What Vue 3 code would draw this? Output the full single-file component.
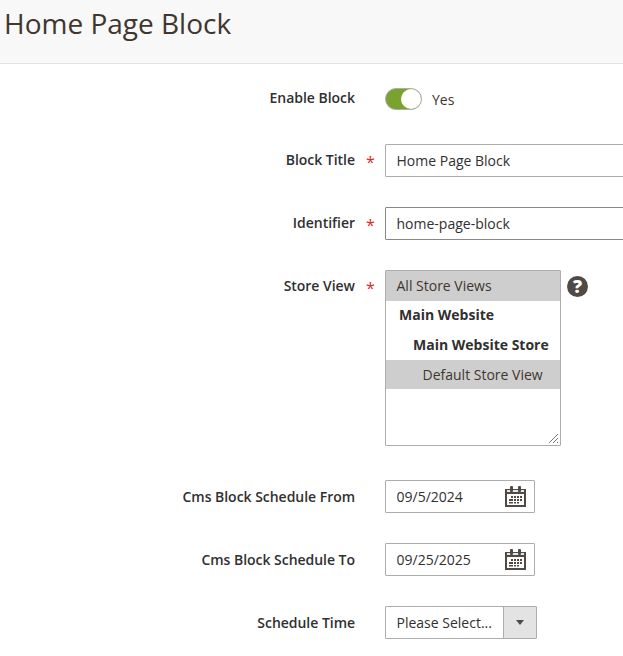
<template>
  <div class="page">
    <header class="page-header">
      <h1>Home Page Block</h1>
    </header>

    <form class="block-form" @submit.prevent>
      <div class="field toggle-field">
        <label class="field-label">Enable Block</label>
        <div class="field-control toggle-wrap">
          <button
            type="button"
            class="toggle"
            :class="{ on: enabled }"
            @click="enabled = !enabled"
          >
            <span class="knob"></span>
          </button>
          <span class="toggle-text">{{ enabled ? "Yes" : "No" }}</span>
        </div>
      </div>

      <div class="field required">
        <label class="field-label" for="title">Block Title</label>
        <div class="field-control">
          <input id="title" v-model="title" type="text" class="text-input wide" />
        </div>
      </div>

      <div class="field required">
        <label class="field-label" for="identifier">Identifier</label>
        <div class="field-control">
          <input id="identifier" v-model="identifier" type="text" class="text-input wide dark" />
        </div>
      </div>

      <div class="field required store-field">
        <label class="field-label">Store View</label>
        <div class="field-control store-control">
          <div class="store-list">
            <div
              v-for="item in stores"
              :key="item.label"
              class="store-option"
              :class="[item.kind, { selected: item.selected }]"
            >
              {{ item.label }}
            </div>
            <svg class="resize-grip" width="11" height="11" viewBox="0 0 11 11">
              <path d="M1 10 L10 1 M5 10 L10 5 M9 10 L10 9" stroke="#777" stroke-width="1" fill="none" />
            </svg>
          </div>
          <span class="help-icon">?</span>
        </div>
      </div>

      <div v-for="date in dates" :key="date.id" class="field date-field">
        <label class="field-label" :for="date.id">{{ date.label }}</label>
        <div class="field-control">
          <div class="date-box">
            <input :id="date.id" v-model="date.value" type="text" class="date-input" />
            <svg class="calendar" width="21" height="21" viewBox="0 0 21 21">
              <rect x="0" y="3" width="21" height="18" fill="#514943" />
              <rect x="2" y="8" width="17" height="11" fill="#fff" />
              <rect x="2" y="4" width="17" height="2" fill="#e8e6e4" />
              <rect x="5" y="0" width="3" height="6" rx="1" fill="#514943" />
              <rect x="13" y="0" width="3" height="6" rx="1" fill="#514943" />
              <path
                d="M6 10h2v2H6zM9 10h2v2H9zM12 10h2v2h-2zM15 10h2v2h-2zM4 13h2v2H4zM6 13h2v2H6zM9 13h2v2H9zM12 13h2v2h-2zM15 13h2v2h-2zM4 16h2v1.5H4zM6 16h2v1.5H6zM9 16h2v1.5H9zM12 16h2v1.5h-2z"
                fill="#514943"
              />
            </svg>
          </div>
        </div>
      </div>

      <div class="field time-field">
        <label class="field-label">Schedule Time</label>
        <div class="field-control">
          <div class="select-box">
            <span class="select-value">Please Select...</span>
            <span class="select-arrow"></span>
          </div>
        </div>
      </div>
    </form>
  </div>
</template>

<script setup>
import { reactive, ref } from "vue";

const enabled = ref(true);
const title = ref("Home Page Block");
const identifier = ref("home-page-block");

const stores = [
  { label: "All Store Views", kind: "level-all", selected: true },
  { label: "Main Website", kind: "level-site", selected: false },
  { label: "Main Website Store", kind: "level-store", selected: false },
  { label: "Default Store View", kind: "level-view", selected: true },
];

const dates = reactive([
  { id: "from", label: "Cms Block Schedule From", value: "09/5/2024" },
  { id: "to", label: "Cms Block Schedule To", value: "09/25/2025" },
]);
</script>

<style>
html,
body {
  margin: 0;
  background: #fff;
  overflow: hidden;
}
</style>

<style scoped>
* {
  box-sizing: border-box;
  font-family: "Open Sans", sans-serif;
}

.page {
  width: 623px;
  height: 656px;
  overflow: hidden;
  color: #303030;
  font-size: 14px;
}

.page-header {
  height: 64px;
  padding: 4px 0 0 4px;
  background: #f8f8f8;
  border-bottom: 1px solid #e3e3e3;
}

.page-header h1 {
  margin: 0;
  font-size: 28px;
  font-weight: 400;
  line-height: 38px;
  color: #41362f;
}

.block-form {
  padding-top: 24px;
}

.field {
  display: flex;
  align-items: flex-start;
  margin-bottom: 30px;
}

.toggle-field,
.store-field {
  margin-bottom: 34px;
}

.field-label {
  position: relative;
  width: 355px;
  flex: none;
  padding-top: 6px;
  font-weight: 600;
  line-height: 20px;
  letter-spacing: -0.03px;
  text-align: right;
  color: #303030;
}

.toggle-field .field-label {
  padding-top: 0;
}

.date-field .field-label,
.time-field .field-label {
  padding-top: 7px;
}

.required .field-label::after {
  content: "*";
  position: absolute;
  left: 366px;
  top: 8px;
  color: #e22626;
  font-size: 16px;
  font-weight: 400;
  line-height: 20px;
}

.field-control {
  margin-left: 30px;
}

.toggle-wrap {
  display: flex;
  align-items: center;
  gap: 10px;
  height: 22px;
}

.toggle {
  position: relative;
  width: 37px;
  height: 22px;
  padding: 0;
  border: 1px solid #adadad;
  border-radius: 12px;
  background: #adadad;
}

.toggle.on {
  background: #79a22e;
}

.knob {
  position: absolute;
  top: 0;
  right: 0;
  width: 20px;
  height: 20px;
  border-radius: 50%;
  background: #fff;
}

.toggle-text {
  color: #41362f;
  font-size: 14px;
}

.text-input {
  display: block;
  height: 33px;
  padding: 0 10.5px;
  border: 1px solid #adadad;
  border-radius: 1px;
  outline: none;
  color: #303030;
  font-size: 14px;
  background: #fff;
}

.text-input.wide {
  width: 420px;
}

.text-input.dark {
  border-color: #888;
}

.store-control {
  display: flex;
  align-items: flex-start;
  gap: 6px;
}

.store-list {
  position: relative;
  width: 176px;
  height: 176px;
  border: 1px solid #adadad;
  border-radius: 1px;
  background: #fff;
}

.store-option {
  height: 29.5px;
  line-height: 29px;
  color: #303030;
  white-space: nowrap;
}

.store-option.selected {
  background: #cecece;
  color: #41362f;
}

.level-all {
  padding-left: 10.5px;
}

.level-site {
  padding-left: 13px;
  font-weight: 700;
  line-height: 27px;
}

.level-store {
  padding-left: 27px;
  font-weight: 700;
}

.level-view {
  padding-left: 36.5px;
}

.resize-grip {
  position: absolute;
  right: 1px;
  bottom: 1px;
}

.help-icon {
  width: 21px;
  height: 21px;
  margin-top: 6px;
  border-radius: 50%;
  background: #514943;
  color: #fff;
  font-size: 18px;
  font-weight: 800;
  line-height: 21px;
  text-align: center;
}

.date-box {
  display: flex;
  align-items: center;
  width: 150px;
  height: 33px;
  padding: 0 8px 0 10.5px;
  border: 1px solid #adadad;
  border-radius: 1px;
  background: #fff;
}

.date-input {
  flex: 1;
  width: 0;
  padding: 0;
  border: 0;
  outline: none;
  color: #303030;
  font-size: 14px;
}

.calendar {
  flex: none;
}

.select-box {
  display: flex;
  width: 152px;
  height: 33px;
  border: 1px solid #adadad;
  border-radius: 1px;
  background: #fff;
}

.select-value {
  flex: 1;
  padding-left: 10.5px;
  line-height: 31px;
  color: #303030;
  white-space: nowrap;
}

.select-arrow {
  position: relative;
  width: 33px;
  flex: none;
  border-left: 1px solid #adadad;
  background: #e3e3e3;
}

.select-arrow::after {
  content: "";
  position: absolute;
  left: 12px;
  top: 13px;
  border-style: solid;
  border-width: 5px 4px 0;
  border-color: #514943 transparent transparent;
}
</style>
